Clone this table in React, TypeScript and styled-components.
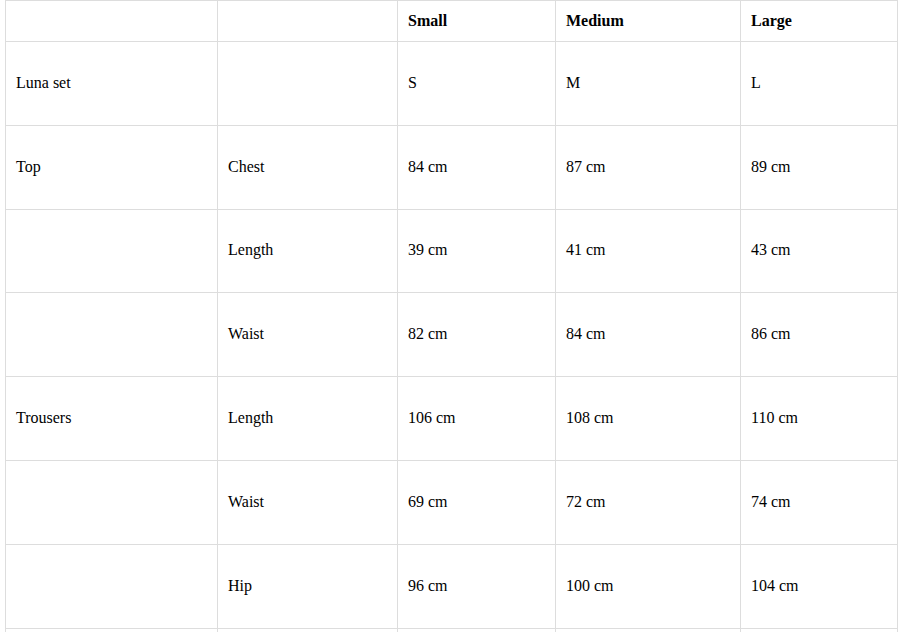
import React from "react";
import styled, { createGlobalStyle } from "styled-components";

const GlobalStyle = createGlobalStyle`
  body {
    margin: 0;
    background: #fff;
    font-family: "Liberation Serif", "Times New Roman", serif;
    color: #000;
  }
`;

const SizeTable = styled.table`
  margin-left: 5px;
  width: 892px;
  border-collapse: collapse;
  table-layout: fixed;
  font-size: 16px;
`;

const HeadRow = styled.tr`
  height: 41px;
`;

const BodyRow = styled.tr`
  height: 83.8px;
`;

const HeadCell = styled.th`
  border: 1px solid #dddddd;
  padding: 0 10px 1px;
  text-align: left;
  font-weight: bold;
`;

const Cell = styled.td`
  border: 1px solid #dddddd;
  padding: 0 10px 1px;
  text-align: left;
`;

const columns = [212, 180, 158, 185, 157];

const rows: string[][] = [
  ["Luna set", "", "S", "M", "L"],
  ["Top", "Chest", "84 cm", "87 cm", "89 cm"],
  ["", "Length", "39 cm", "41 cm", "43 cm"],
  ["", "Waist", "82 cm", "84 cm", "86 cm"],
  ["Trousers", "Length", "106 cm", "108 cm", "110 cm"],
  ["", "Waist", "69 cm", "72 cm", "74 cm"],
  ["", "Hip", "96 cm", "100 cm", "104 cm"],
  ["", "", "", "", ""],
];

const App: React.FC = () => {
  return (
    <>
      <GlobalStyle />
      <SizeTable>
        <colgroup>
          {columns.map((w, i) => (
            <col key={i} style={{ width: w }} />
          ))}
        </colgroup>
        <thead>
          <HeadRow>
            <HeadCell></HeadCell>
            <HeadCell></HeadCell>
            <HeadCell>Small</HeadCell>
            <HeadCell>Medium</HeadCell>
            <HeadCell>Large</HeadCell>
          </HeadRow>
        </thead>
        <tbody>
          {rows.map((row, index) => (
            <BodyRow key={index}>
              {row.map((value, i) => (
                <Cell key={i}>{value}</Cell>
              ))}
            </BodyRow>
          ))}
        </tbody>
      </SizeTable>
    </>
  );
};

export default App;
